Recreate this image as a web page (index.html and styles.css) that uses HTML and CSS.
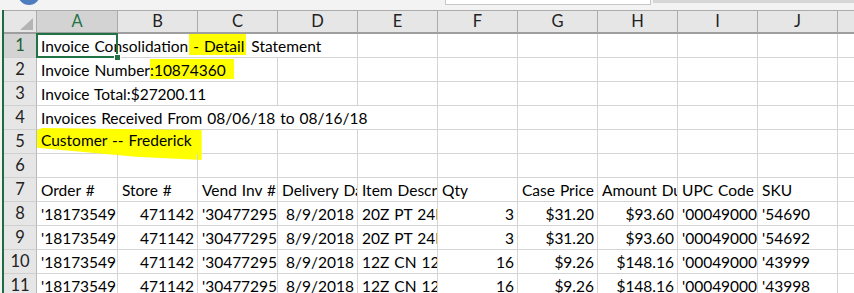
FILE: index.html
```html
<!DOCTYPE html>
<html>
<head>
<meta charset="utf-8">
<title>Invoice Consolidation</title>
<link rel="stylesheet" href="styles.css">
</head>
<body>
<div class="topbar">
	<div class="logo"><div class="dot"></div></div>
	<div class="namebox"></div>
	<div class="ribbon"></div>
</div>
<div class="sheet">
	<!-- column headers -->
	<div class="corner"><span class="tri"></span></div>
	<div class="hd sel">A</div>
	<div class="hd">B</div>
	<div class="hd">C</div>
	<div class="hd">D</div>
	<div class="hd">E</div>
	<div class="hd">F</div>
	<div class="hd">G</div>
	<div class="hd">H</div>
	<div class="hd">I</div>
	<div class="hd">J</div>
	<div class="hd last"></div>

	<!-- row 1 -->
	<div class="rh sel">1</div>
	<div class="c spill s4">Invoice Consolidation <span class="hl h1">- Detail</span> Statement<span class="active"><i></i></span></div>
	<div class="c"></div><div class="c"></div><div class="c"></div><div class="c"></div><div class="c"></div><div class="c"></div><div class="c last"></div>

	<!-- row 2 -->
	<div class="rh">2</div>
	<div class="c spill s3">Invoice Number<span class="hl h2">:10874360</span></div>
	<div class="c"></div><div class="c"></div><div class="c"></div><div class="c"></div><div class="c"></div><div class="c"></div><div class="c"></div><div class="c last"></div>

	<!-- row 3 -->
	<div class="rh">3</div>
	<div class="c spill s3">Invoice Total:$27200.11</div>
	<div class="c"></div><div class="c"></div><div class="c"></div><div class="c"></div><div class="c"></div><div class="c"></div><div class="c"></div><div class="c last"></div>

	<!-- row 4 -->
	<div class="rh">4</div>
	<div class="c spill s5">Invoices Received From 08/06/18 to 08/16/18</div>
	<div class="c"></div><div class="c"></div><div class="c"></div><div class="c"></div><div class="c"></div><div class="c last"></div>

	<!-- row 5 -->
	<div class="rh">5</div>
	<div class="c spill s3"><span class="h5">Customer -- Frederick</span></div>
	<div class="c"></div><div class="c"></div><div class="c"></div><div class="c"></div><div class="c"></div><div class="c"></div><div class="c"></div><div class="c last"></div>

	<!-- row 6 -->
	<div class="rh">6</div>
	<div class="c"></div><div class="c"></div><div class="c"></div><div class="c"></div><div class="c"></div><div class="c"></div><div class="c"></div><div class="c"></div><div class="c"></div><div class="c"></div><div class="c last"></div>

	<!-- row 7 -->
	<div class="rh">7</div>
	<div class="c">Order #</div>
	<div class="c">Store #</div>
	<div class="c">Vend Inv #</div>
	<div class="c">Delivery Date</div>
	<div class="c">Item Description</div>
	<div class="c">Qty</div>
	<div class="c">Case Price</div>
	<div class="c">Amount Due</div>
	<div class="c">UPC Code</div>
	<div class="c">SKU</div>
	<div class="c last"></div>

	<!-- row 8 -->
	<div class="rh">8</div>
	<div class="c">'18173549</div>
	<div class="c r">471142</div>
	<div class="c">'30477295</div>
	<div class="c r">8/9/2018</div>
	<div class="c">20Z PT 24LS</div>
	<div class="c r">3</div>
	<div class="c r">$31.20</div>
	<div class="c r">$93.60</div>
	<div class="c">'00049000</div>
	<div class="c">'54690</div>
	<div class="c last"></div>

	<!-- row 9 -->
	<div class="rh">9</div>
	<div class="c">'18173549</div>
	<div class="c r">471142</div>
	<div class="c">'30477295</div>
	<div class="c r">8/9/2018</div>
	<div class="c">20Z PT 24LS</div>
	<div class="c r">3</div>
	<div class="c r">$31.20</div>
	<div class="c r">$93.60</div>
	<div class="c">'00049000</div>
	<div class="c">'54692</div>
	<div class="c last"></div>

	<!-- row 10 -->
	<div class="rh">10</div>
	<div class="c">'18173549</div>
	<div class="c r">471142</div>
	<div class="c">'30477295</div>
	<div class="c r">8/9/2018</div>
	<div class="c">12Z CN 12LS</div>
	<div class="c r">16</div>
	<div class="c r">$9.26</div>
	<div class="c r">$148.16</div>
	<div class="c">'00049000</div>
	<div class="c">'43999</div>
	<div class="c last"></div>

	<!-- row 11 -->
	<div class="rh">11</div>
	<div class="c">'18173549</div>
	<div class="c r">471142</div>
	<div class="c">'30477295</div>
	<div class="c r">8/9/2018</div>
	<div class="c">12Z CN 12LS</div>
	<div class="c r">16</div>
	<div class="c r">$9.26</div>
	<div class="c r">$148.16</div>
	<div class="c">'00049000</div>
	<div class="c">'43998</div>
	<div class="c last"></div>
</div>
</body>
</html>
```

FILE: styles.css
```css
html,body{
	margin:0;
	height:100%;
}
body{
	overflow:hidden;
	background:#f3f3f3;
	font-family:Lato, "Liberation Sans", sans-serif;
	font-size:15.5px;
	word-spacing:1px;
	color:#000;
}
.topbar{
	display:flex;
	height:10px;
	overflow:hidden;
}
.logo{
	width:22px;
	margin-left:18px;
}
.dot{
	width:22px;
	height:22px;
	margin-top:-17px;
	border-radius:50%;
	background:#4d7cbf;
}
.namebox{
	width:204px;
	height:4px;
	margin-left:405px;
	background:#fff;
	border:1px solid #c8c8c8;
	border-top:0;
}
.ribbon{
	flex:1;
	height:3px;
	margin-left:2px;
	background:#d6d6d6;
}
.sheet{
	display:grid;
	grid-template-columns:33px 81px repeat(9,80px) 1fr;
	grid-auto-rows:24px;
	margin-left:2px;
	border-left:2px solid #1f6b41;
	background:#fff;
}
.sheet div{
	box-sizing:border-box;
}
.corner,.hd{
	background:#e6e6e6;
	border-top:1px solid #ababab;
	border-bottom:2px solid #9e9e9e;
	border-right:1px solid #ababab;
}
.corner{
	display:flex;
	justify-content:flex-end;
	align-items:flex-end;
	padding:0 3px 2px 0;
}
.tri{
	width:13px;
	height:12px;
	background:#b4b4b4;
	clip-path:polygon(100% 0,100% 100%,0 100%);
}
.hd{
	text-align:center;
	line-height:21px;
	font-size:16.5px;
	color:#222;
}
.hd.last{
	border-right:0;
}
.hd.sel{
	background:#d3d3d3;
	color:#217346;
}
.rh{
	background:#e6e6e6;
	border-right:1px solid #b9b9b9;
	border-bottom:1px solid #d0d0d0;
	text-align:center;
	line-height:23px;
	font-size:16.5px;
	color:#222;
}
.rh.sel{
	background:#d3d3d3;
	color:#1e5e3a;
}
.c{
	position:relative;
	border-right:1px solid #d4d4d4;
	border-bottom:1px solid #d4d4d4;
	padding:0 3px 0 4px;
	line-height:24px;
	white-space:nowrap;
	overflow:hidden;
}
.c.r{
	text-align:right;
}
.c.last{
	border-right:0;
}
.spill{
	overflow:visible;
}
.s3{
	grid-column:span 3;
}
.s4{
	grid-column:span 4;
}
.s5{
	grid-column:span 5;
}
/* active cell A1 */
.active{
	position:absolute;
	left:-1px;
	top:-1px;
	width:82px;
	height:25px;
	box-sizing:border-box;
	border:2px solid #217346;
}
.active i{
	position:absolute;
	right:-5px;
	bottom:-5px;
	width:5px;
	height:5px;
	background:#217346;
	border:1px solid #fff;
}
/* highlighter marks */
.hl{
	background:#ffff00;
}
.h1{
	padding:3px 2px 0 4px;
	margin-left:-4px;
}
.h2{
	padding:2px 8px 0 0;
}
.h5{
	display:inline-block;
	vertical-align:top;
	height:32px;
	line-height:24px;
	margin-left:-4px;
	margin-top:-2px;
	padding:0 10px 0 4px;
	background:#ffff00;
	clip-path:polygon(3% 0,100% 6%,100% 100%,60% 90%,0 62%,0 8%);
}
```
